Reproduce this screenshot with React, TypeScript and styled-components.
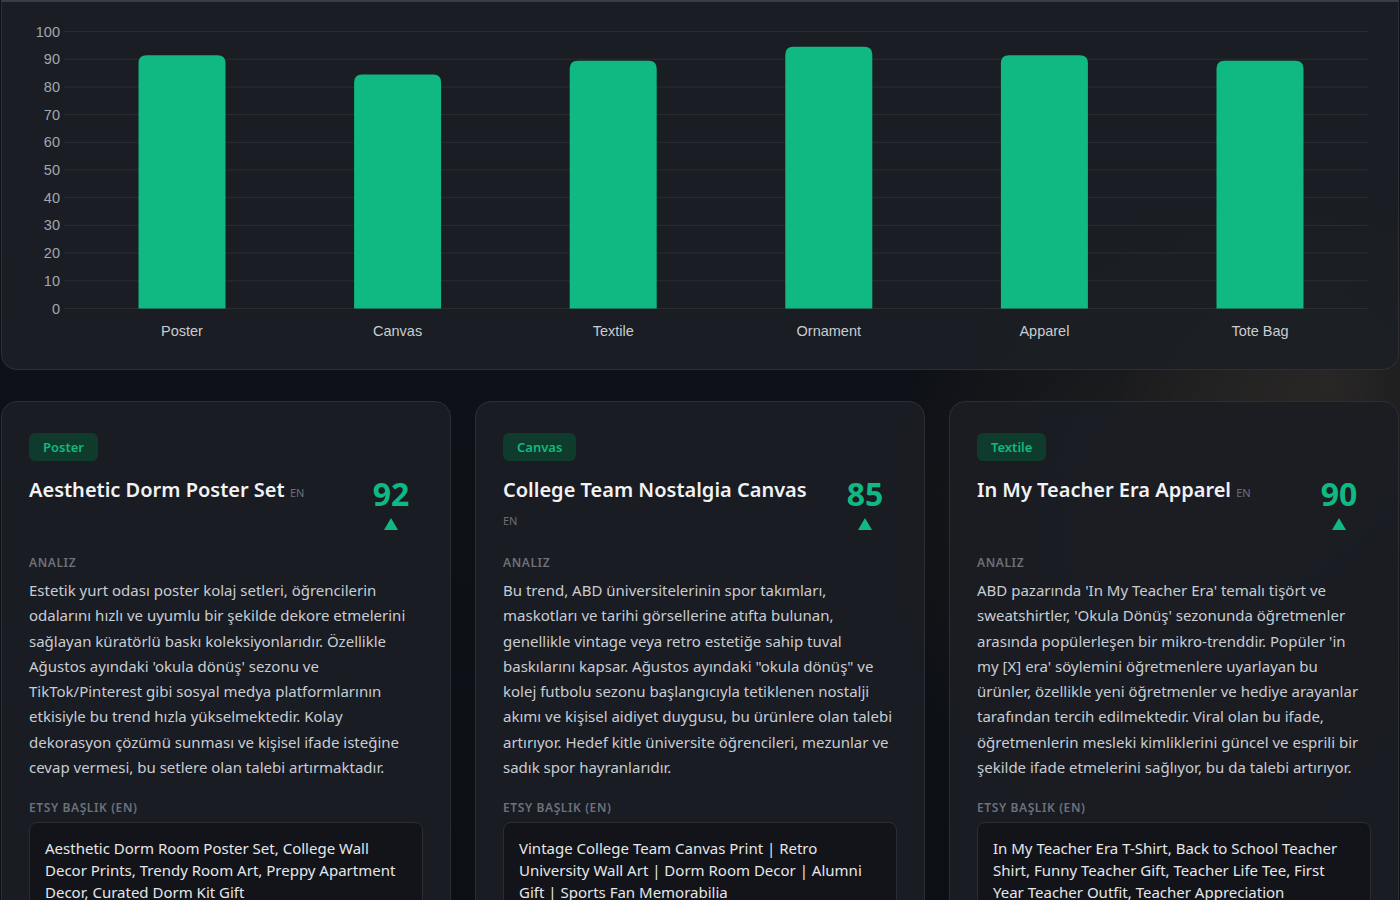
import React from "react";
import styled, { createGlobalStyle } from "styled-components";

const GlobalStyle = createGlobalStyle`
  html, body { margin: 0; padding: 0; }
  body {
    background-color: #0d1016;
    background-image:
      radial-gradient(ellipse 420px 520px at 1180px 520px, rgba(70, 62, 52, 0.38), transparent 70%),
      radial-gradient(ellipse 300px 300px at 1330px 380px, rgba(80, 72, 60, 0.34), transparent 70%),
      linear-gradient(180deg, #0f1218 0%, #0c0f14 100%);
    background-attachment: fixed;
    font-family: "Noto Sans", "Open Sans", sans-serif;
    color: #e5e7eb;
  }
`;

const Page = styled.div`
  padding: 0 1px 40px 1px;
  display: flex;
  flex-direction: column;
  gap: 31px;
`;

const ChartPanel = styled.section`
  height: 370px;
  box-sizing: border-box;
  background: rgba(28, 31, 37, 0.9);
  border: 1px solid #2c2f36;
  border-top: 2px solid #3a3d44;
  border-radius: 0 0 16px 16px;
  overflow: hidden;
`;

const ChartSvg = styled.svg`
  display: block;
  width: 1396px;
  height: 367px;
`;

const Cards = styled.div`
  display: grid;
  grid-template-columns: repeat(3, 1fr);
  gap: 24px;
`;

const Card = styled.article`
  background: rgba(27, 29, 35, 0.93);
  border: 1px solid #2b2e35;
  border-radius: 16px;
  padding: 31px 27px 28px 27px;
  display: flex;
  flex-direction: column;
  align-items: flex-start;
  min-width: 0;
`;

const Tag = styled.span`
  display: inline-flex;
  align-items: center;
  height: 28px;
  padding: 0 14px;
  border-radius: 6px;
  background: #0f3b2c;
  color: #10b981;
  font-size: 13px;
  font-weight: 600;
`;

const Header = styled.div`
  align-self: stretch;
  display: flex;
  justify-content: space-between;
  align-items: flex-start;
  gap: 16px;
  margin-top: 13px;
`;

const Title = styled.h3`
  margin: 2px 0 0 0;
  font-size: 20px;
  line-height: 28px;
  font-weight: 600;
  color: #f1f2f4;
  flex: 1;
  min-width: 0;
`;

const Lang = styled.span`
  font-size: 11px;
  line-height: 1;
  font-weight: 400;
  color: #6b7078;
`;

const ScoreCol = styled.div`
  width: 64px;
  flex: 0 0 64px;
  padding-bottom: 2px;
  display: flex;
  flex-direction: column;
  align-items: center;
`;

const Score = styled.div`
  font-size: 32px;
  line-height: 40px;
  font-weight: 700;
  color: #10b981;
`;

const Up = styled.div`
  width: 0;
  height: 0;
  margin-top: 4px;
  border-left: 7px solid transparent;
  border-right: 7px solid transparent;
  border-bottom: 12px solid #10b981;
`;

const Label = styled.div<{ $gap: number }>`
  margin-top: ${(p) => p.$gap}px;
  font-size: 12px;
  line-height: 16px;
  font-weight: 600;
  letter-spacing: 0.6px;
  text-transform: uppercase;
  color: #6d7179;
`;

const Body = styled.p`
  margin: 7px 0 0 0;
  font-size: 15px;
  line-height: 25.3px;
  color: #c9cdd3;
`;

const TitleBox = styled.div`
  align-self: stretch;
  margin-top: 6px;
  border: 1px solid #2a2d34;
  border-radius: 8px;
  background: #121419;
  padding: 14px 15px;
  font-size: 15px;
  line-height: 22px;
  color: #e6e7ea;
`;

type Item = {
  tag: string;
  title: string;
  score: number;
  analysis: string;
  etsy: string;
};

const items: Item[] = [
  {
    tag: "Poster",
    title: "Aesthetic Dorm Poster Set",
    score: 92,
    analysis:
      "Estetik yurt odası poster kolaj setleri, öğrencilerin odalarını hızlı ve uyumlu bir şekilde dekore etmelerini sağlayan küratörlü baskı koleksiyonlarıdır. Özellikle Ağustos ayındaki 'okula dönüş' sezonu ve TikTok/Pinterest gibi sosyal medya platformlarının etkisiyle bu trend hızla yükselmektedir. Kolay dekorasyon çözümü sunması ve kişisel ifade isteğine cevap vermesi, bu setlere olan talebi artırmaktadır.",
    etsy:
      "Aesthetic Dorm Room Poster Set, College Wall Decor Prints, Trendy Room Art, Preppy Apartment Decor, Curated Dorm Kit Gift",
  },
  {
    tag: "Canvas",
    title: "College Team Nostalgia Canvas",
    score: 85,
    analysis:
      "Bu trend, ABD üniversitelerinin spor takımları, maskotları ve tarihi görsellerine atıfta bulunan, genellikle vintage veya retro estetiğe sahip tuval baskılarını kapsar. Ağustos ayındaki \"okula dönüş\" ve kolej futbolu sezonu başlangıcıyla tetiklenen nostalji akımı ve kişisel aidiyet duygusu, bu ürünlere olan talebi artırıyor. Hedef kitle üniversite öğrencileri, mezunlar ve sadık spor hayranlarıdır.",
    etsy:
      "Vintage College Team Canvas Print | Retro University Wall Art | Dorm Room Decor | Alumni Gift | Sports Fan Memorabilia",
  },
  {
    tag: "Textile",
    title: "In My Teacher Era Apparel",
    score: 90,
    analysis:
      "ABD pazarında 'In My Teacher Era' temalı tişört ve sweatshirtler, 'Okula Dönüş' sezonunda öğretmenler arasında popülerleşen bir mikro-trenddir. Popüler 'in my [X] era' söylemini öğretmenlere uyarlayan bu ürünler, özellikle yeni öğretmenler ve hediye arayanlar tarafından tercih edilmektedir. Viral olan bu ifade, öğretmenlerin mesleki kimliklerini güncel ve esprili bir şekilde ifade etmelerini sağlıyor, bu da talebi artırıyor.",
    etsy:
      "In My Teacher Era T-Shirt, Back to School Teacher Shirt, Funny Teacher Gift, Teacher Life Tee, First Year Teacher Outfit, Teacher Appreciation",
  },
];

const chartData = [
  { label: "Poster", value: 92 },
  { label: "Canvas", value: 85 },
  { label: "Textile", value: 90 },
  { label: "Ornament", value: 95 },
  { label: "Apparel", value: 92 },
  { label: "Tote Bag", value: 90 },
];

const Y0 = 308.5;
const PER = 2.77;
const PLOT_LEFT = 74.2;
const SLOT = 215.6;
const BAR_W = 87;

const yOf = (v: number) => Y0 - v * PER;

function barPath(cx: number, top: number, bottom: number, w: number, r: number) {
  const l = cx - w / 2;
  const rr = cx + w / 2;
  return `M${l},${bottom} L${l},${top + r} Q${l},${top} ${l + r},${top} L${rr - r},${top} Q${rr},${top} ${rr},${top + r} L${rr},${bottom} Z`;
}

function Chart() {
  const ticks = [0, 10, 20, 30, 40, 50, 60, 70, 80, 90, 100];
  return (
    <ChartSvg viewBox="2 2 1396 367">
      {ticks.map((t) => (
        <g key={t}>
          <line x1={64} x2={1368} y1={yOf(t)} y2={yOf(t)} stroke="rgba(255,255,255,0.07)" strokeWidth={1} />
          <text
            x={60}
            y={yOf(t)}
            textAnchor="end"
            dominantBaseline="central"
            fontFamily="'Liberation Sans', Arial, sans-serif"
            fontSize={14.5}
            fill="#a3a7ae"
          >
            {t}
          </text>
        </g>
      ))}
      {chartData.map((d, i) => {
        const cx = PLOT_LEFT + SLOT * (i + 0.5);
        return (
          <g key={d.label}>
            <path d={barPath(cx, yOf(d.value) + 1.5, Y0, BAR_W, 8)} fill="#10b981" />
            <text
              x={cx}
              y={331}
              textAnchor="middle"
              dominantBaseline="central"
              fontFamily="'Liberation Sans', Arial, sans-serif"
              fontSize={14.5}
              fill="#c9ccd1"
            >
              {d.label}
            </text>
          </g>
        );
      })}
    </ChartSvg>
  );
}

export default function App() {
  return (
    <>
      <GlobalStyle />
      <Page>
        <ChartPanel>
          <Chart />
        </ChartPanel>
        <Cards>
          {items.map((it) => (
            <Card key={it.tag}>
              <Tag>{it.tag}</Tag>
              <Header>
                <Title>
                  {it.title} <Lang>EN</Lang>
                </Title>
                <ScoreCol>
                  <Score>{it.score}</Score>
                  <Up />
                </ScoreCol>
              </Header>
              <Label $gap={23}>Analiz</Label>
              <Body>{it.analysis}</Body>
              <Label $gap={20}>Etsy Başlık (EN)</Label>
              <TitleBox>{it.etsy}</TitleBox>
            </Card>
          ))}
        </Cards>
      </Page>
    </>
  );
}
